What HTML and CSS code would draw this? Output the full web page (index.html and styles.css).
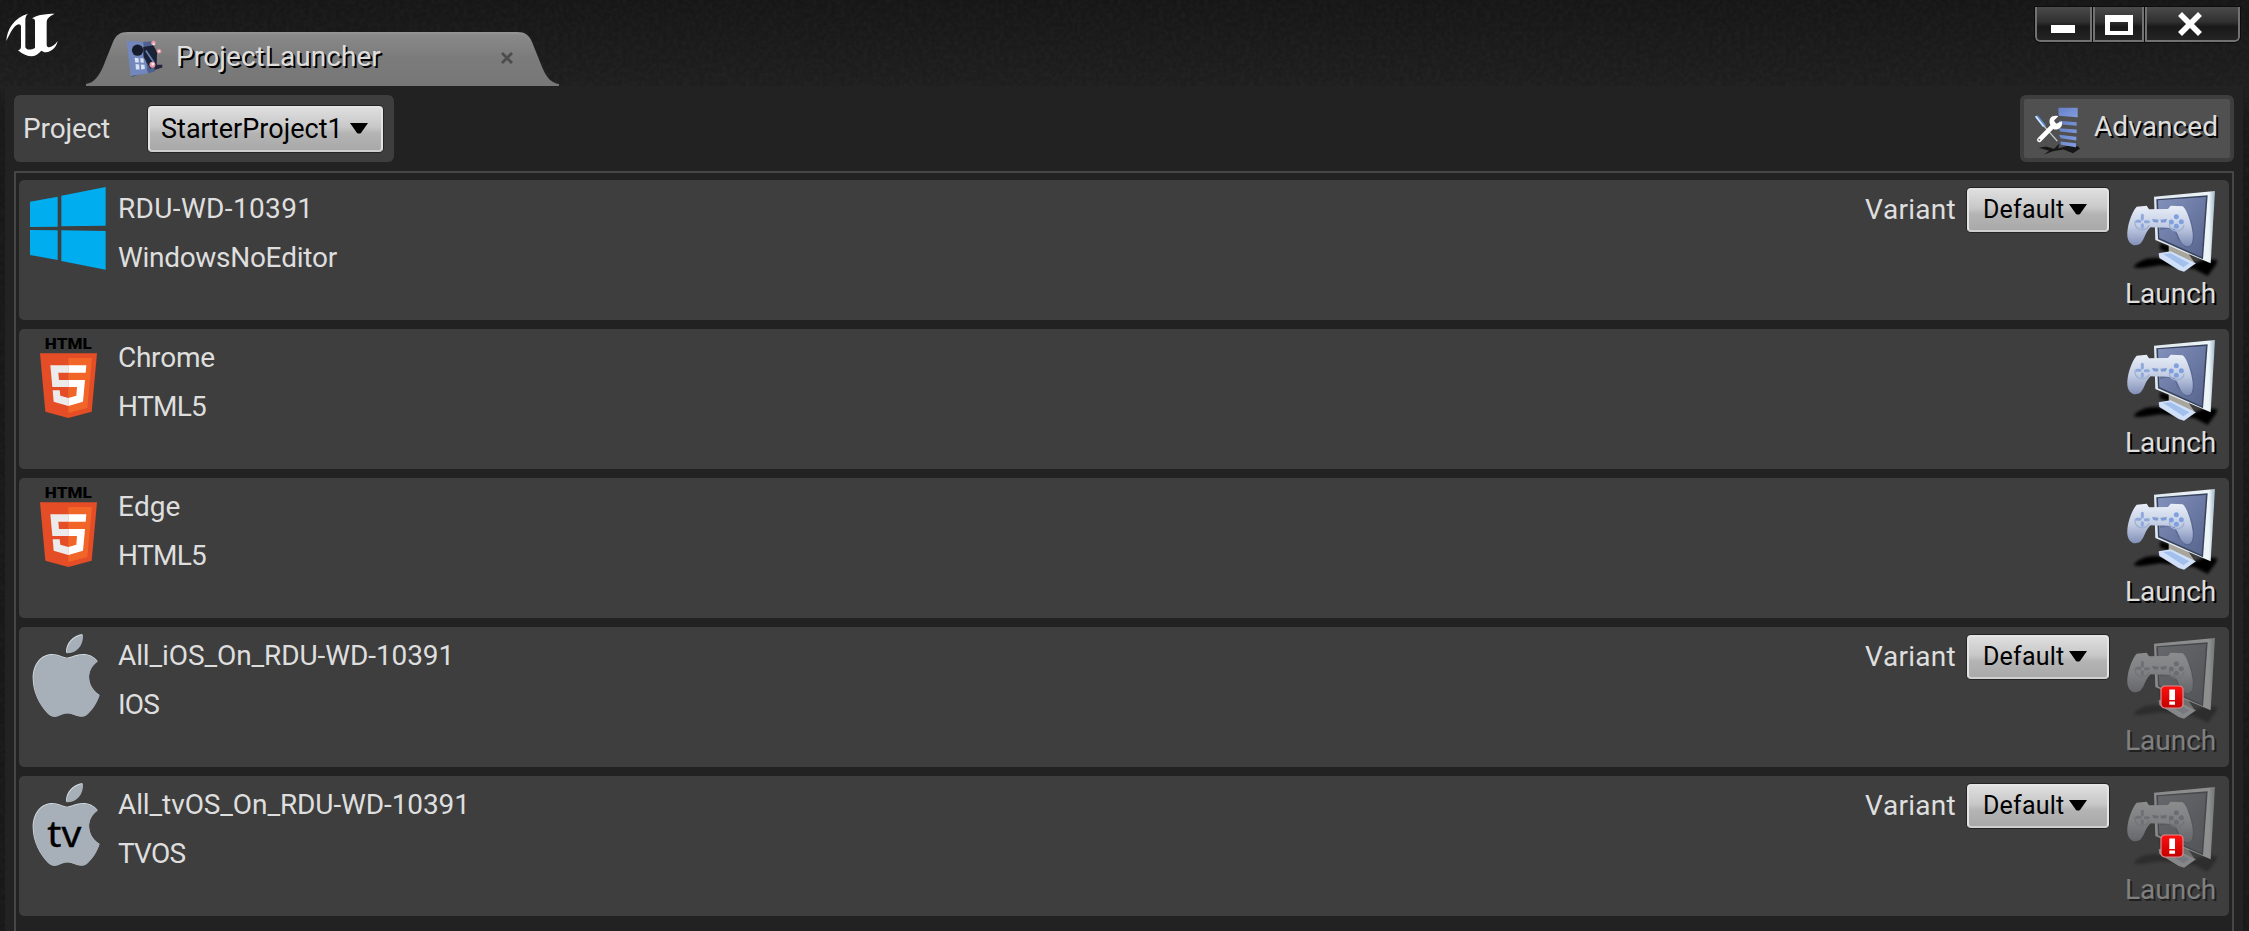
FILE: index.html
```
<!DOCTYPE html>
<html lang="en">
<head>
<meta charset="utf-8">
<title>ProjectLauncher</title>
<link rel="stylesheet" href="styles.css">
</head>
<body>
<svg class="defs" width="0" height="0" aria-hidden="true">
  <defs>
    <linearGradient id="screen" x1="0" y1="0" x2="1" y2="1"><stop offset="0" stop-color="#8292bd"/><stop offset="1" stop-color="#56638c"/></linearGradient>
    <linearGradient id="pad" x1="0" y1="0" x2="0" y2="1"><stop offset="0" stop-color="#e9eef8"/><stop offset=".5" stop-color="#c3cee4"/><stop offset="1" stop-color="#7f8db6"/></linearGradient>
    <linearGradient id="frame" x1="0" y1="0" x2="1" y2="0"><stop offset="0" stop-color="#dfe8f0"/><stop offset=".9" stop-color="#eef5f8"/><stop offset="1" stop-color="#9fb6c6"/></linearGradient>
    <linearGradient id="bar" x1="0" y1="0" x2="1" y2="1"><stop offset="0" stop-color="#6680c6"/><stop offset="1" stop-color="#839de0"/></linearGradient>
    <linearGradient id="alert" x1="0" y1="0" x2="0" y2="1"><stop offset="0" stop-color="#ff1010"/><stop offset="1" stop-color="#c40000"/></linearGradient>
    <filter id="soft" x="-10%" y="-10%" width="120%" height="120%"><feGaussianBlur stdDeviation="1.8"/></filter>
    <filter id="shade" x="-20%" y="-40%" width="140%" height="180%"><feGaussianBlur stdDeviation="4"/></filter>
    <filter id="grain"><feTurbulence type="fractalNoise" baseFrequency=".22" numOctaves="2" seed="4"/><feColorMatrix values="0 0 0 0 1  0 0 0 0 1  0 0 0 0 1  .5 0 0 0 -.15"/></filter>

    <symbol id="i-windows" viewBox="57 60 285 270">
      <path fill="#00adef" d="M90 125L173 110V200L90 201ZM184 107L317 81V197L184 199ZM90 210L173 211V300L90 285ZM184 211L317 213V329L184 303Z"/>
    </symbol>
    <symbol id="i-html5" viewBox="57 27 285 270">
      <text class="html-word" x="134" y="87" textLength="141" lengthAdjust="spacingAndGlyphs">HTML</text>
      <path fill="#e44d26" d="M120 100H291L275 275L205 294L136 275Z"/>
      <path fill="#f16529" d="M205 114H276L262 264L205 279Z"/>
      <path fill="#ebebeb" d="M205 136H151L157 201H205V180H177L175 158H205ZM205 234L181 227L179 211H158L161 245L205 258Z"/>
      <path fill="#fff" d="M205 136H259L257 158H205ZM205 180H255L249 245L205 258V234L229 227L231 201H205Z"/>
    </symbol>
    <symbol id="i-apple" viewBox="57 51 285 270">
      <g fill="#dce3e8" transform="translate(-1 -2)">
        <path d="M248 74C250 105 230 130 199 130C197 101 222 77 248 74Z"/>
        <path d="M202 145C218 143 229 134 250 134C268 134 284 142 294 155C259 178 258 230 299 256C291 281 277 300 264 313C254 322 239 323 225 317C208 310 197 310 181 317C167 323 156 323 145 313C120 289 99 248 99 207C99 162 126 134 157 134C176 134 187 143 202 145Z"/>
      </g>
      <g fill="#a7b0b8">
        <path d="M249 74C251 105 231 130 200 130C198 101 223 77 249 74Z"/>
        <path d="M202 145C218 143 229 134 250 134C268 134 284 142 293 155C258 178 258 230 299 256C291 281 277 300 264 312C254 322 239 323 225 316C208 309 197 309 181 316C167 323 156 323 145 312C120 288 100 248 100 207C100 162 126 134 157 134C176 134 187 143 202 145Z"/>
      </g>
    </symbol>
    <symbol id="i-launch" viewBox="0 0 360 300">
      <path filter="url(#shade)" fill="#050505" d="M70 262C85 240 120 230 155 236L240 256L285 238L322 240L318 254L293 288L255 268L215 262L150 256C125 258 100 268 70 262ZM150 190L190 200L186 222L150 208Z"/>
      <g filter="url(#soft)">
        <path fill="#a8a59c" d="M176 196L232 216L252 246L218 246L176 220Z"/>
        <path fill="url(#frame)" d="M132 50L315 33L302 250L136 180Z"/>
        <path fill="#39445f" d="M139 58L293 46L279 238L144 178Z"/>
        <path fill="url(#screen)" d="M144 61L288 51L275 231L148 174Z"/>
        <path fill="#cfe0f8" d="M146 220L182 214L258 250L222 275L206 270L148 234Z"/>
        <path fill="#a3bfec" d="M160 222L182 220L238 250L220 262Z"/>
        <path fill="#4e5c86" opacity=".5" d="M222 84Q254 120 252 180Q248 206 226 202L204 178L190 144L150 150V140L214 100Z"/>
        <path fill="url(#pad)" d="M80 80L110 77L117 88L174 87L182 77L218 79C232 90 244 130 248 160C250 192 242 202 228 198C208 190 208 164 194 148C170 140 150 144 122 142C106 154 104 178 92 190C74 204 54 192 52 168C50 140 64 98 80 80Z"/>
        <path fill="none" stroke="#9fb0d2" stroke-width="4" d="M76 122A22 20 0 0 0 118 136M178 132A22 20 0 0 0 222 134"/>
        <path stroke="#8fa9dc" stroke-width="9" fill="none" stroke-linecap="round" d="M97 106V117M97 134V142M81 124H90M106 125H115"/>
        <path fill="#7f9bd2" d="M126 117L146 119L143 128L130 126ZM151 119L171 117L168 127L154 128Z"/>
        <g fill="#7fa0de"><circle cx="199" cy="110" r="7.5"/><circle cx="199" cy="139" r="7.5"/><circle cx="184" cy="126" r="7.5"/><circle cx="214" cy="125" r="7.5"/></g>
      </g>
    </symbol>
    <symbol id="i-alert" viewBox="0 0 24 24">
      <rect x="1" y="1" width="22" height="22" rx="4" fill="url(#alert)" stroke="#dc8d8d" stroke-width="1.2"/>
      <path fill="#fff" d="M9.3 4.5H15V15H9.3ZM9.3 16.5H15V19.7H9.3Z"/>
    </symbol>
  </defs>
</svg>

<div class="window">
  <svg class="grain" width="100%" height="100%" aria-hidden="true"><rect width="100%" height="100%" filter="url(#grain)"/></svg>
  <header class="titlebar">
    <svg class="logo" viewBox="0 0 195 180" aria-label="Unreal">
      <path filter="url(#soft)" fill="#fff" d="M19 108C20 73 43 38 84 26C77 32 76 38 76 48V126C77 134 90 137 105 129V48C105 43 100 40 95 40C106 36 111 27 164 26C144 36 140 42 140 55V119C141 133 160 127 173 108C168 131 151 142 133 142L124 137C116 145 108 153 96 154C81 154 69 148 54 136C61 134 63 131 63 122V64C62 57 56 56 50 60C36 70 29 88 19 108Z"/>
    </svg>
    <div class="tab">
      <svg class="tab-shape" viewBox="0 0 474 54" preserveAspectRatio="none" aria-hidden="true">
        <defs><linearGradient id="tabfill" x1="0" y1="0" x2="0" y2="1"><stop offset="0" stop-color="#989898"/><stop offset=".06" stop-color="#898989"/><stop offset=".5" stop-color="#7b7b7b"/><stop offset="1" stop-color="#777"/></linearGradient></defs>
        <path fill="url(#tabfill)" d="M0 54V52C8 51 13 44 17 35L27 10C30 3 34 0 42 0H432C440 0 444 3 447 10L457 35C461 45 466 51 474 52V54Z"/>
      </svg>
      <svg class="tab-icon" viewBox="380 100 110 115">
        <g filter="url(#soft)">
          <path fill="#202838" d="M470 178L489 178V186L458 196L396 214V206Z"/>
          <path fill="#7288bd" d="M381 105L431 109L446 204L393 213Z"/>
          <path fill="#4d618f" d="M431 109L458 107L466 198L446 204Z"/>
          <circle cx="414" cy="134" r="17" fill="#171c2b"/>
          <path fill="#1d2434" d="M431 124L462 119L473 140L472 178L452 190L432 154Z"/>
          <path fill="#d7e2f4" d="M405 157L417 158L418 171L407 171ZM422 158L432 159L433 172L423 171ZM408 176L419 177L420 192L409 192ZM424 177L435 178L436 191L425 192Z"/>
          <path stroke="#6284bd" stroke-width="5" d="M439 135L464 172"/>
          <g fill="#eb9aa6"><circle cx="462" cy="112" r="7"/><circle cx="479" cy="137" r="7"/><circle cx="459" cy="178" r="9"/></g>
          <g fill="#fff0f3"><circle cx="463" cy="116" r="3"/><circle cx="479" cy="137" r="3"/><circle cx="460" cy="176" r="4"/></g>
        </g>
      </svg>
      <span class="tab-title">ProjectLauncher</span>
      <svg class="tab-close" viewBox="0 0 14 14"><path d="M2 2L12 12M12 2L2 12" stroke="#4d4d4d" stroke-width="2.8"/></svg>
    </div>
    <div class="controls">
      <button class="ctl ctl-min" aria-label="Minimize"><svg width="26" height="10"><rect x="1" y="1" width="24" height="8" fill="#fff"/></svg></button>
      <button class="ctl ctl-max" aria-label="Maximize"><svg width="28" height="20"><path fill="#fff" fill-rule="evenodd" d="M0 0H28V20H0ZM5 7V16H23V7Z"/></svg></button>
      <button class="ctl ctl-close" aria-label="Close"><svg width="26" height="24"><path d="M5 4L21 20M21 4L5 20" stroke="#fff" stroke-width="5.6" stroke-linecap="square"/></svg></button>
    </div>
  </header>

  <main class="panel">
    <div class="toolbar">
      <div class="project">
        <span class="project-label">Project</span>
        <button class="combo combo-project"><span>StarterProject1</span><svg class="arrow" viewBox="0 0 18 11"><path d="M0 0H18L11 10Q9 11 7 10Z"/></svg></button>
      </div>
      <button class="advanced">
        <svg class="advanced-icon" viewBox="25 20 150 155">
          <g filter="url(#soft)">
            <path fill="#191919" d="M42 151L64 147L88 154L104 139L101 153L128 145L160 146L166 154L145 167L116 156L85 161L58 171L73 160Z"/>
            <path fill="url(#bar)" d="M101 31H159V59L102 55Z"/>
            <path fill="url(#bar)" d="M103 70L156 74V85L104 80ZM103 92L156 96V107L106 102ZM103 112L155 118V129L108 122ZM107 132L154 137V149L109 142Z"/>
            <path stroke="#5c8ed8" stroke-width="10" stroke-linecap="round" d="M38 59L58 84"/>
            <path stroke="#d9eaff" stroke-width="5" d="M33 56L57 87"/>
            <path stroke="#c4ced6" stroke-width="4" d="M58 86L98 131"/>
            <path stroke="#fff" stroke-width="14" stroke-linecap="round" d="M44 127L88 82"/>
            <path fill="#fff" d="M76 80C70 62 83 51 101 56L88 69L94 79L111 71C116 84 107 97 88 96Z"/>
            <circle cx="44" cy="127" r="3" fill="#777"/>
          </g>
        </svg>
        <span>Advanced</span>
      </button>
    </div>

    <section class="list">
      <article class="row">
        <svg class="platform"><use href="#i-windows"/></svg>
        <div class="names"><span class="wide">RDU-WD-10391</span><span class="tight">WindowsNoEditor</span></div>
        <div class="variant"><span>Variant</span><button class="combo combo-variant"><span>Default</span><svg class="arrow" viewBox="0 0 18 11"><path d="M0 0H18L11 10Q9 11 7 10Z"/></svg></button></div>
        <button class="launch"><svg class="launch-icon"><use href="#i-launch"/></svg><span>Launch</span></button>
      </article>
      <article class="row">
        <svg class="platform"><use href="#i-html5"/></svg>
        <div class="names"><span class="tight">Chrome</span><span class="tighter">HTML5</span></div>
        <button class="launch"><svg class="launch-icon"><use href="#i-launch"/></svg><span>Launch</span></button>
      </article>
      <article class="row">
        <svg class="platform"><use href="#i-html5"/></svg>
        <div class="names"><span>Edge</span><span class="tighter">HTML5</span></div>
        <button class="launch"><svg class="launch-icon"><use href="#i-launch"/></svg><span>Launch</span></button>
      </article>
      <article class="row">
        <svg class="platform"><use href="#i-apple"/></svg>
        <div class="names"><span class="snug">All_iOS_On_RDU-WD-10391</span><span class="tighter">IOS</span></div>
        <div class="variant"><span>Variant</span><button class="combo combo-variant"><span>Default</span><svg class="arrow" viewBox="0 0 18 11"><path d="M0 0H18L11 10Q9 11 7 10Z"/></svg></button></div>
        <button class="launch disabled"><svg class="launch-icon"><use href="#i-launch"/></svg><span>Launch</span><svg class="badge"><use href="#i-alert"/></svg></button>
      </article>
      <article class="row">
        <svg class="platform" viewBox="0 0 285 270"><use href="#i-apple" width="285" height="270"/><text class="tv-word" x="85" y="212" textLength="102" lengthAdjust="spacingAndGlyphs">tv</text></svg>
        <div class="names"><span class="snug">All_tvOS_On_RDU-WD-10391</span><span class="tighter">TVOS</span></div>
        <div class="variant"><span>Variant</span><button class="combo combo-variant"><span>Default</span><svg class="arrow" viewBox="0 0 18 11"><path d="M0 0H18L11 10Q9 11 7 10Z"/></svg></button></div>
        <button class="launch disabled"><svg class="launch-icon"><use href="#i-launch"/></svg><span>Launch</span><svg class="badge"><use href="#i-alert"/></svg></button>
      </article>
    </section>
  </main>
</div>
</body>
</html>
```
FILE: styles.css
```
* { box-sizing: border-box; }
body { margin: 0; background: #181818; font-family: Roboto, sans-serif; font-size: 28px; color: #dedede; font-kerning: none; }
button { margin: 0; padding: 0; border: 0; background: none; font: inherit; font-kerning: none; color: inherit; text-align: left; }
svg { display: block; flex: none; }
.defs { position: absolute; }
.window { position: relative; height: 931px; overflow: hidden; display: flex; flex-direction: column; background: linear-gradient(#161616, #1e1e1e 86px, #181818 120px); }
.grain { position: absolute; inset: 0; opacity: .1; }

.titlebar { position: relative; height: 86px; flex: none; display: flex; align-items: flex-start; }
.logo { width: 65px; height: 60px; margin: 5px 21px 0 0; }
.tab { position: relative; width: 473px; height: 54px; margin-top: 32px; display: flex; align-items: flex-start; padding-left: 40px; }
.tab-shape { position: absolute; inset: 0; width: 100%; height: 100%; }
.tab-icon { position: relative; width: 37px; height: 38px; margin-top: 7px; }
.tab-title { position: relative; width: 337px; padding-left: 13px; margin-top: 8px; line-height: 34px; letter-spacing: .05px; text-shadow: 2px 2px 0 #000; }
.tab-close { position: relative; width: 14px; height: 14px; margin-top: 19px; }
.controls { margin: 7px 9px 0 auto; display: flex; gap: 1px; }
.ctl { height: 35px; display: flex; align-items: center; justify-content: center; border: 2px solid #727272; border-top: 0; background: linear-gradient(#4b4b4b, #303030 45%, #191919 60%, #242424); outline: 1px solid #0c0c0c; }
.ctl-min { width: 57px; padding: 10px 2px 0 0; border-bottom-left-radius: 5px; }
.ctl-max { width: 51px; padding-top: 2px; }
.ctl-close { width: 95px; padding: 0 5px 0 0; border-bottom-right-radius: 5px; }

.panel { position: relative; flex: 1; min-height: 0; margin: 0 6px 0 5px; padding: 9px 9px 0; background: #222; display: flex; flex-direction: column; }
.toolbar { display: flex; justify-content: space-between; height: 67px; }
.project { display: flex; align-items: center; width: 380px; padding-left: 9px; border-radius: 6px; background: #3e3e3e; }
.project-label { width: 125px; letter-spacing: -.2px; }
.combo { display: flex; align-items: center; color: #000; border: 2px solid #e4e4e4; border-bottom-color: #cfcfcf; border-radius: 4px; background: linear-gradient(#dedede, #c8c8c8 45%, #b4b4b4 60%, #a9a9a9); box-shadow: 0 0 0 1px #252525; }
.combo-project { width: 235px; height: 46px; padding-left: 11px; font-size: 27px; letter-spacing: .02px; }
.combo-project .arrow { margin-left: 7px; }
.arrow { width: 18px; height: 11px; }
.advanced { width: 214px; border: 4px solid #3e3e3e; border-radius: 6px; background: #505050; display: flex; align-items: center; padding: 0 0 4px 9px; text-shadow: 2px 2px 0 #000; }
.advanced-icon { width: 50px; height: 52px; margin: 6px 11px 0 0; }
.advanced span { letter-spacing: .05px; }

.list { flex: 1; min-height: 0; margin-top: 9px; padding: 7px 3px 0; border: 2px solid #464646; border-bottom: 0; display: flex; flex-direction: column; gap: 9px; }
.row { position: relative; flex: none; height: 140px; display: flex; align-items: flex-start; border-radius: 5px; background: #3e3e3e; }
.platform { width: 95px; height: 90px; }
.html-word { font-size: 46px; font-weight: 900; fill: #000; }
.tv-word { font: 108px "Noto Sans", sans-serif; fill: #000; stroke: #000; stroke-width: 1; }
.names { flex: 1; display: flex; flex-direction: column; padding: 4px 0 0 4px; line-height: 49px; }
.wide { letter-spacing: .35px; }
.snug { letter-spacing: -.1px; }
.tight { letter-spacing: -.3px; }
.tighter { letter-spacing: -.8px; }
.variant { display: flex; align-items: flex-start; line-height: 34px; margin-right: 1px; }
.variant > span { width: 102px; margin-top: 13px; letter-spacing: .25px; }
.combo-variant { width: 142px; height: 44px; margin-top: 8px; padding-left: 14px; font-size: 25px; letter-spacing: .2px; }
.combo-variant .arrow { margin: -1px 0 0 5px; }
.launch { position: relative; width: 119px; height: 140px; display: flex; flex-direction: column; align-items: flex-start; text-shadow: 2px 2px 0 #000; }
.launch-icon { width: 120px; height: 100px; }
.launch span { padding-left: 15px; margin-top: -3px; line-height: 34px; }
.disabled .launch-icon { filter: grayscale(.75) contrast(.8) brightness(1.05); opacity: .48; }
.disabled span { color: #808080; text-shadow: 2px 2px 0 #202020; }
.badge { position: absolute; left: 50px; top: 58px; width: 24px; height: 24px; }
```
